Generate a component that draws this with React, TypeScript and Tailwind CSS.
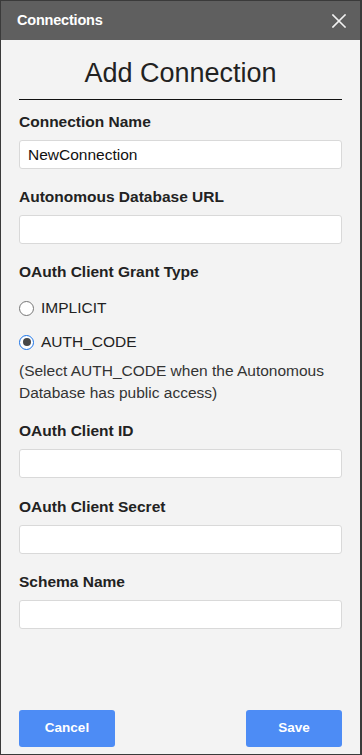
import React from "react";

function Field({ label, value, top }: { label: string; value?: string; top: string }) {
  return (
    <div className={`flex flex-col ${top}`}>
      <div className="text-[15.5px] leading-[18px] font-bold text-[#222]">{label}</div>
      <div className="mt-[9px] h-[29px] rounded-[3px] border border-[#d9d9d9] bg-white flex items-center pl-[8px] text-[15.5px] text-[#111]">
        {value}
      </div>
    </div>
  );
}

function Radio({ checked, label, top }: { checked?: boolean; label: string; top: string }) {
  return (
    <div className={`flex items-center h-[22px] ${top}`}>
      {checked ? (
        <div className="w-[15px] h-[15px] rounded-full border-[1.5px] border-[#1a73e8] bg-white flex items-center justify-center">
          <div className="w-[8px] h-[8px] rounded-full bg-[#474747]" />
        </div>
      ) : (
        <div className="w-[15px] h-[15px] rounded-full border border-[#767676] bg-white" />
      )}
      <span className="ml-[7px] text-[15.5px] text-[#222]">{label}</span>
    </div>
  );
}

export default function App() {
  return (
    <div
      className="w-[362px] h-[755px] flex flex-col border border-[#3a3a3a] border-r-2 bg-[#f3f3f3]"
      style={{ fontFamily: '"Liberation Sans", Arial, sans-serif' }}
    >
      <div className="h-[39px] bg-[#5f5f5f] flex items-center justify-between pl-[16px] pr-[14px]">
        <span className="text-white font-bold text-[14.5px] tracking-[-0.2px]">Connections</span>
        <svg width="14" height="14" viewBox="0 0 14 14" className="text-[#f2f2f2]">
          <path d="M1 1L13 13M13 1L1 13" stroke="currentColor" strokeWidth="1.6" strokeLinecap="square" />
        </svg>
      </div>
      <div className="flex-1 flex flex-col px-[18px]">
        <div className="mt-[18px] pb-[10px] border-b border-[#111] text-center text-[27px] leading-[31px] text-[#222]">
          Add Connection
        </div>
        <Field label="Connection Name" value="NewConnection" top="mt-[13px]" />
        <Field label="Autonomous Database URL" top="mt-[19px]" />
        <div className="mt-[19px] text-[15.5px] leading-[18px] font-bold text-[#222]">OAuth Client Grant Type</div>
        <Radio label="IMPLICIT" top="mt-[16px]" />
        <Radio label="AUTH_CODE" checked top="mt-[12px]" />
        <div className="mt-[7px] text-[15.5px] leading-[22px] text-[#333]">
          (Select AUTH_CODE when the Autonomous Database has public access)
        </div>
        <Field label="OAuth Client ID" top="mt-[18px]" />
        <Field label="OAuth Client Secret" top="mt-[20px]" />
        <Field label="Schema Name" top="mt-[19px]" />
        <div className="mt-auto mb-[7px] flex justify-between">
          <button className="w-[96px] h-[37px] rounded-[3px] bg-[#4d8cf5] text-white font-bold text-[13.5px]">
            Cancel
          </button>
          <button className="w-[96px] h-[37px] rounded-[3px] bg-[#4d8cf5] text-white font-bold text-[13.5px]">
            Save
          </button>
        </div>
      </div>
    </div>
  );
}
